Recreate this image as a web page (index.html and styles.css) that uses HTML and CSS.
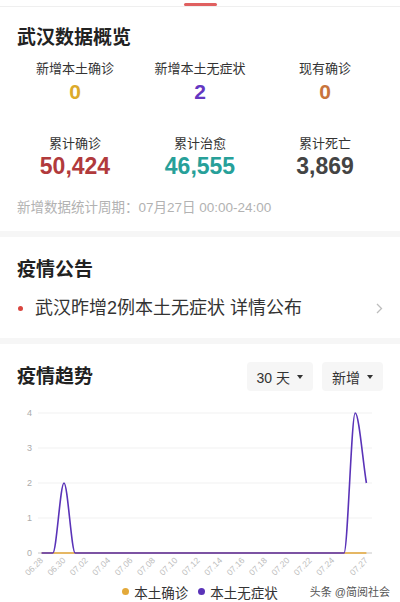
FILE: index.html
```html
<!DOCTYPE html>
<html lang="zh-CN">
<head>
<meta charset="utf-8">
<title>武汉数据概览</title>
<link rel="stylesheet" href="styles.css">
</head>
<body>
<div class="topbar"><span class="tab-indicator"></span></div>

<section class="card overview">
  <h2 class="card-title">武汉数据概览</h2>
  <div class="stats">
    <div class="stat"><div class="stat-label">新增本土确诊</div><div class="stat-value v-yellow">0</div></div>
    <div class="stat"><div class="stat-label">新增本土无症状</div><div class="stat-value v-purple">2</div></div>
    <div class="stat"><div class="stat-label">现有确诊</div><div class="stat-value v-orange">0</div></div>
  </div>
  <div class="stats stats-total">
    <div class="stat"><div class="stat-label">累计确诊</div><div class="stat-value big v-red">50,424</div></div>
    <div class="stat"><div class="stat-label">累计治愈</div><div class="stat-value big v-teal">46,555</div></div>
    <div class="stat"><div class="stat-label">累计死亡</div><div class="stat-value big v-dark">3,869</div></div>
  </div>
  <p class="period">新增数据统计周期：07月27日 00:00-24:00</p>
</section>

<div class="divider"></div>

<section class="card notice">
  <h2 class="card-title">疫情公告</h2>
  <div class="notice-row">
    <span class="dot"></span>
    <span class="notice-text">武汉昨增2例本土无症状 详情公布</span>
    <svg class="chev" width="7" height="11" viewBox="0 0 7 11"><polyline points="1,1 5.5,5.5 1,10" fill="none" stroke="#bdbdbd" stroke-width="1.3"/></svg>
  </div>
</section>

<div class="divider"></div>

<section class="card trend">
  <div class="trend-head">
    <h2 class="card-title">疫情趋势</h2>
    <div class="filters">
      <div class="filter">30 天<span class="caret"></span></div>
      <div class="filter">新增<span class="caret"></span></div>
    </div>
  </div>
  <svg class="chart" width="400" height="190" viewBox="0 391 400 190">
    <g stroke="#f1f1f1" stroke-width="1">
      <line x1="38" y1="413" x2="372" y2="413"/>
      <line x1="38" y1="448" x2="372" y2="448"/>
      <line x1="38" y1="483" x2="372" y2="483"/>
      <line x1="38" y1="518" x2="372" y2="518"/>
    </g>
    <line x1="38" y1="553" x2="372" y2="553" stroke="#c8c8c8" stroke-width="1"/>
    <g class="ylab" fill="#ababab" font-size="9" text-anchor="end">
      <text x="32" y="416">4</text>
      <text x="32" y="451">3</text>
      <text x="32" y="486">2</text>
      <text x="32" y="521">1</text>
      <text x="32" y="556">0</text>
    </g>
    <line x1="41.6" y1="553" x2="366.4" y2="553" stroke="#e6a93a" stroke-width="1.6"/>
    <path d="M41.6 553 L52.8 553 C56.5 553 60.3 483 64 483 C67.7 483 71.5 553 75.2 553 L344 553 C347.7 553 351.5 413 355.2 413 C358.9 413 362.7 460 366.4 483" fill="none" stroke="#5a33b8" stroke-width="1.6" stroke-linejoin="round"/>
    <g class="xlab" fill="#bcbcbc" font-size="8.5" text-anchor="end">
      <text transform="translate(43.6 561) rotate(-45)">06.28</text>
      <text transform="translate(66 561) rotate(-45)">06.30</text>
      <text transform="translate(88.4 561) rotate(-45)">07.02</text>
      <text transform="translate(110.8 561) rotate(-45)">07.04</text>
      <text transform="translate(133.2 561) rotate(-45)">07.06</text>
      <text transform="translate(155.6 561) rotate(-45)">07.08</text>
      <text transform="translate(178 561) rotate(-45)">07.10</text>
      <text transform="translate(200.4 561) rotate(-45)">07.12</text>
      <text transform="translate(222.8 561) rotate(-45)">07.14</text>
      <text transform="translate(245.2 561) rotate(-45)">07.16</text>
      <text transform="translate(267.6 561) rotate(-45)">07.18</text>
      <text transform="translate(290 561) rotate(-45)">07.20</text>
      <text transform="translate(312.4 561) rotate(-45)">07.22</text>
      <text transform="translate(334.8 561) rotate(-45)">07.24</text>
      <text transform="translate(368.4 561) rotate(-45)">07.27</text>
    </g>
  </svg>
  <div class="legend">
    <span class="legend-item"><span class="ldot ld-yellow"></span>本土确诊</span>
    <span class="legend-item"><span class="ldot ld-purple"></span>本土无症状</span>
  </div>
  <span class="watermark">头条 @简阅社会</span>
</section>
</body>
</html>
```
FILE: styles.css
```css
* { box-sizing: border-box; }
html, body { margin: 0; padding: 0; }
body {
  width: 400px;
  height: 602px;
  overflow: hidden;
  background: #fff;
  font-family: "Liberation Sans", "Noto Sans CJK SC", sans-serif;
  color: #333;
}
.topbar {
  height: 7px;
  border-bottom: 1px solid #efefef;
  display: flex;
  justify-content: center;
  align-items: flex-end;
}
.tab-indicator {
  display: block;
  width: 33px;
  height: 3px;
  background: #e06060;
  border-radius: 2px;
  margin-left: 1px;
}
.card { padding-left: 17px; padding-right: 17px; }
.card-title {
  margin: 0;
  font-size: 19px;
  line-height: 26px;
  font-weight: 700;
  color: #222;
}
.overview { padding-top: 18px; padding-bottom: 14px; }
.stats {
  display: grid;
  grid-template-columns: repeat(3, 125px);
  margin: 9px -17px 0 -4.5px;
  text-align: center;
}
.stats-total { margin-top: 30px; }
.stat-label {
  font-size: 13px;
  line-height: 18px;
  color: #333;
}
.stat-value {
  margin-top: 1px;
  font-size: 21px;
  line-height: 26px;
  font-weight: 700;
}
.stat-value.big { margin-top: 0; font-size: 23px; }
.v-yellow { color: #dcaa2a; }
.v-purple { color: #6437c2; }
.v-orange { color: #c8743c; }
.v-red { color: #b13a3c; }
.v-teal { color: #27a099; }
.v-dark { color: #444; }
.period {
  margin: 20px 0 0;
  font-size: 13.5px;
  line-height: 18px;
  color: #b2b2b2;
}
.divider { height: 6px; background: #f6f6f6; }
.notice { padding-top: 20px; padding-bottom: 17px; }
.notice-row {
  margin-top: 12px;
  height: 26px;
  display: flex;
  align-items: center;
}
.dot {
  width: 5px;
  height: 5px;
  border-radius: 50%;
  background: #d9453f;
  margin-left: 1px;
  margin-right: 12px;
}
.notice-text {
  flex: 1;
  font-size: 18px;
  line-height: 26px;
  color: #333;
}
.trend { padding-top: 18px; position: relative; height: 258px; }
.trend-head {
  display: flex;
  justify-content: space-between;
  align-items: center;
  height: 29px;
}
.filters { display: flex; gap: 9px; }
.filter {
  height: 29px;
  padding: 0 10px;
  display: flex;
  align-items: center;
  white-space: nowrap;
  background: #f6f6f6;
  border-radius: 4px;
  font-size: 14px;
  color: #333;
}
.caret {
  margin-left: 7px;
  width: 0;
  height: 0;
  border-left: 3px solid transparent;
  border-right: 3px solid transparent;
  border-top: 4px solid #333;
}
.chart { display: block; margin: 0 -17px; }
.chart text { font-family: "Liberation Sans", sans-serif; }
.legend {
  display: flex;
  justify-content: center;
  gap: 10px;
  height: 21px;
  align-items: center;
  font-size: 13.5px;
  color: #333;
}
.legend-item { display: flex; align-items: center; }
.ldot {
  width: 7px;
  height: 7px;
  border-radius: 50%;
  margin-right: 5px;
}
.ld-yellow { background: #e3a93a; }
.ld-purple { background: #5a33b8; }
.watermark {
  position: absolute;
  right: 10px;
  bottom: 3px;
  font-size: 11px;
  color: #555;
}
```
